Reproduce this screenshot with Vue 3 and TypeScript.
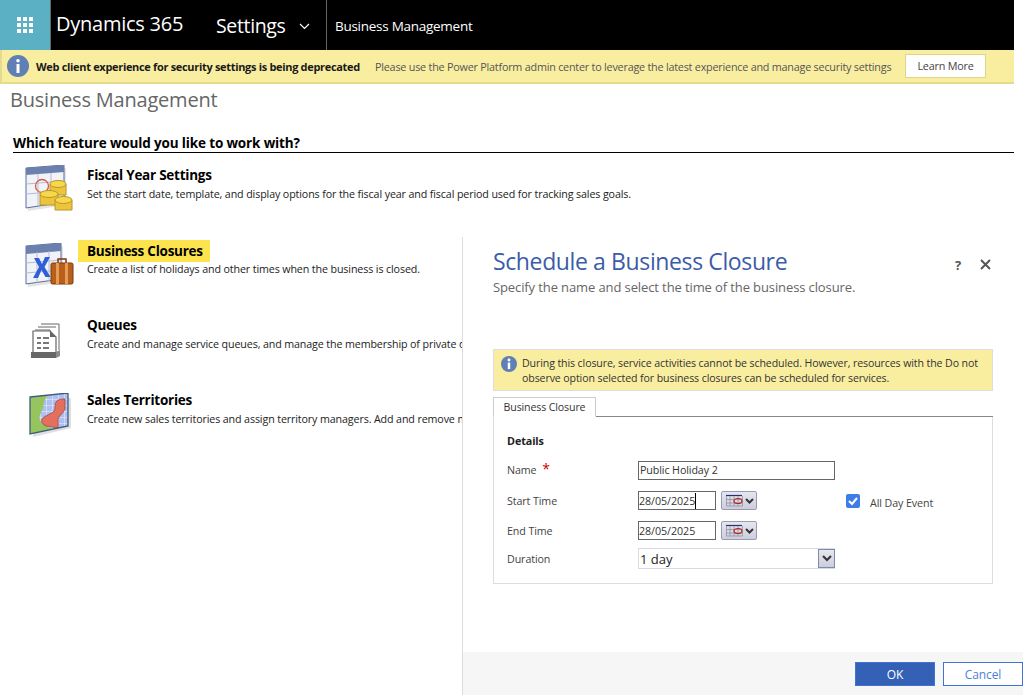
<script setup lang="ts">
const features = [
  { id: 'fy', title: 'Fiscal Year Settings', desc: 'Set the start date, template, and display options for the fiscal year and fiscal period used for tracking sales goals.', hl: false },
  { id: 'bc', title: 'Business Closures', desc: 'Create a list of holidays and other times when the business is closed.', hl: true },
  { id: 'q', title: 'Queues', desc: 'Create and manage service queues, and manage the membership of private queues for your organization and its teams.', hl: false },
  { id: 'st', title: 'Sales Territories', desc: 'Create new sales territories and assign territory managers. Add and remove members from sales territories as needed.', hl: false },
]
</script>

<template>
  <div class="page">
    <header class="nav">
      <div class="waffle">
        <svg width="17" height="17" viewBox="0 0 17 17" fill="#fff">
          <rect x="0" y="0" width="4" height="4" /><rect x="6" y="0" width="4" height="4" /><rect x="12" y="0" width="4" height="4" />
          <rect x="0" y="6" width="4" height="4" /><rect x="6" y="6" width="4" height="4" /><rect x="12" y="6" width="4" height="4" />
          <rect x="0" y="12" width="4" height="4" /><rect x="6" y="12" width="4" height="4" /><rect x="12" y="12" width="4" height="4" />
        </svg>
      </div>
      <div class="brand">Dynamics 365</div>
      <div class="area">Settings</div>
      <svg class="chev" width="11" height="7" viewBox="0 0 11 7" fill="none" stroke="#fff" stroke-width="1.2"><path d="M1 1l4.500 4.500L10 1" /></svg>
      <div class="crumb">Business Management</div>
    </header>

    <div class="banner">
      <svg class="bicon" width="22" height="22" viewBox="0 0 22 22">
        <circle cx="11" cy="11" r="11" fill="#5f7fb5" />
        <rect x="9.500" y="9" width="3" height="9" fill="#fff" />
        <circle cx="11" cy="5.800" r="1.800" fill="#fff" />
      </svg>
      <strong class="btitle">Web client experience for security settings is being deprecated</strong>
      <span class="btext">Please use the Power Platform admin center to leverage the latest experience and manage security settings</span>
      <button class="learn">Learn More</button>
    </div>

    <h1 class="title">Business Management</h1>
    <h2 class="question">Which feature would you like to work with?</h2>

    <ul class="features">
      <li v-for="f in features" :key="f.id" class="feature">
        <div class="ficon">
          <svg v-if="f.id === 'fy'" width="50" height="50" viewBox="0 0 50 50">
            <path d="M3 6l38-3v37L3 46z" fill="#c9c9c9" opacity=".5" />
            <path d="M1 3l38-3v37L1 43z" fill="#f1f3f8" stroke="#5b6f9e" />
            <path d="M1 3l38-3v7L1 10z" fill="#6b80ad" />
            <path d="M13 9v32M26 8v31M1 19l38-3M1 29l38-3" stroke="#b4bdd0" fill="none" />
            <circle cx="17" cy="21" r="6.500" fill="none" stroke="#d8594c" stroke-width="1.300" />
            <path d="M25 19v11h16V19z" fill="#edc53d" stroke="#b8962a" />
            <ellipse cx="33" cy="19" rx="8" ry="3.500" fill="#f7d84b" stroke="#b8962a" />
            <path d="M15 29v11h18V29z" fill="#edc53d" stroke="#b8962a" />
            <ellipse cx="24" cy="29" rx="9" ry="3.500" fill="#f7d84b" stroke="#b8962a" />
            <path d="M30 35v10h17V35z" fill="#edc53d" stroke="#b8962a" />
            <ellipse cx="38.500" cy="35" rx="8.500" ry="3.500" fill="#f7d84b" stroke="#b8962a" />
          </svg>
          <svg v-else-if="f.id === 'bc'" width="50" height="44" viewBox="0 0 50 44">
            <path d="M3 6l35-3v36L3 44z" fill="#c9c9c9" opacity=".5" />
            <path d="M1 3l35-3v36L1 41z" fill="#f1f3f8" stroke="#5b6f9e" />
            <path d="M1 3l35-3v8L1 11z" fill="#6b80ad" />
            <path d="M12 9v31M24 8v30M1 20l35-3M1 30l35-3" stroke="#b4bdd0" fill="none" />
            <path d="M9 15h5l3 6 3-7h5l-5.500 10 6 10h-5l-4-7-3.500 8H8l6-11z" fill="#2f5fd8" />
            <rect x="26" y="20" width="22" height="21" rx="1.500" fill="#b85f1c" stroke="#7a3a0c" />
            <path d="M33 20v-4h8v4" fill="none" stroke="#7a3a0c" stroke-width="1.500" />
            <rect x="31" y="20" width="3" height="21" fill="#e59a55" /><rect x="40" y="20" width="3" height="21" fill="#e59a55" />
          </svg>
          <svg v-else-if="f.id === 'q'" width="50" height="36" viewBox="0 0 50 36">
            <path d="M14 1h18v26M11 4h18" fill="none" stroke="#666" />
            <path d="M8 7h15v24" fill="none" stroke="#666" />
            <path d="M6 8h17l6 6v17H6z" fill="#fff" stroke="#666" stroke-width="1.200" />
            <path d="M23 8l6 6h-6z" fill="#666" />
            <path d="M10 14h4v2h-4zM16 14h6v2h-6zM10 19h4v2h-4zM16 19h6v2h-6zM10 24h4v2h-4zM16 24h6v2h-6z" fill="#777" />
            <path d="M4 29h25v6H4z" fill="#666" /><path d="M29 29l4-2v6l-4 2z" fill="#8a8a8a" />
          </svg>
          <svg v-else width="50" height="46" viewBox="0 0 50 46">
            <defs>
              <pattern id="terr-grid" width="6" height="6" patternUnits="userSpaceOnUse">
                <rect width="6" height="6" fill="#aebff2" />
                <path d="M6 0H0V6" fill="none" stroke="#fff" stroke-width=".8" />
              </pattern>
            </defs>
            <path d="M5 8l38-3v30L5 44z" fill="#c4c4c4" opacity=".55" />
            <path d="M2 4l38-4v33L2 41z" fill="#96c55e" />
            <path d="M21 2.500L40 0v33l-16 3c-3-4-9-3-12-9-2-4 2-8 3-12 1-5 1-10 6-12.500z" fill="url(#terr-grid)" />
            <path d="M37 6c-3 0-7 0-9 3-2 3 0 6-2 9-2 3-9 4-12 8-1 3 1 6 4 7 4 0 9 2 12 2 1-4-1-8 1-11 2-3 5-5 6-8z" fill="#e36f5f" stroke="#96402f" stroke-width=".7" />
            <path d="M2 4l38-4v33L2 41z" fill="none" stroke="#3d5d7a" stroke-width="1.300" />
          </svg>
        </div>
        <div class="ftext">
          <div class="ftitle"><span :class="{ hl: f.hl }">{{ f.title }}</span></div>
          <div class="fdesc">{{ f.desc }}</div>
        </div>
      </li>
    </ul>

    <aside class="dialog">
      <div class="dbody">
        <div class="dhead">
          <div>
            <h2 class="dtitle">Schedule a Business Closure</h2>
            <p class="dsub">Specify the name and select the time of the business closure.</p>
          </div>
          <div class="dtools">
            <span class="help">?</span>
            <svg width="11" height="11" viewBox="0 0 11 11" stroke="#555" stroke-width="2"><path d="M1 1l9 9M10 1l-9 9" /></svg>
          </div>
        </div>

        <div class="notice">
          <svg class="nicon" width="16" height="16" viewBox="0 0 22 22">
            <circle cx="11" cy="11" r="11" fill="#5f7fb5" />
            <rect x="9.300" y="9" width="3.400" height="9" fill="#fff" />
            <circle cx="11" cy="5.600" r="2" fill="#fff" />
          </svg>
          <p>During this closure, service activities cannot be scheduled. However, resources with the Do not observe option selected for business closures can be scheduled for services.</p>
        </div>

        <div class="tabs"><div class="tab">Business Closure</div></div>
        <section class="panel">
          <div class="details">Details</div>
          <div class="row r-name">
            <label class="lab">Name <span class="req">*</span></label>
            <div class="input name">Public Holiday 2</div>
          </div>
          <div class="row r-start">
            <label class="lab">Start Time</label>
            <div class="input date">28/05/2025<i class="caret"></i></div>
            <div class="picker">
              <svg width="32" height="18" viewBox="0 0 32 18">
                <path d="M3 3.500h16" stroke="#22337a" stroke-width="1.200" />
                <path d="M3.500 4v10h16V4M3 7.500h16M3 11h16M7 4v10M11 4v10M15 4v10" stroke="#8a8aa0" stroke-width=".7" fill="none" />
                <ellipse cx="15" cy="9" rx="4" ry="2.500" fill="none" stroke="#b5271a" stroke-width="1.200" />
                <path d="M23 7l3.500 3.500L30 7" stroke="#333" stroke-width="2" fill="none" />
              </svg>
            </div>
            <label class="allday">
              <span class="check">
                <svg width="14" height="14" viewBox="0 0 14 14" fill="none" stroke="#fff" stroke-width="2"><path d="M3 7l3 3 5-6" /></svg>
              </span>
              All Day Event
            </label>
          </div>
          <div class="row r-end">
            <label class="lab">End Time</label>
            <div class="input date">28/05/2025</div>
            <div class="picker">
              <svg width="32" height="18" viewBox="0 0 32 18">
                <path d="M3 3.500h16" stroke="#22337a" stroke-width="1.200" />
                <path d="M3.500 4v10h16V4M3 7.500h16M3 11h16M7 4v10M11 4v10M15 4v10" stroke="#8a8aa0" stroke-width=".7" fill="none" />
                <ellipse cx="15" cy="9" rx="4" ry="2.500" fill="none" stroke="#b5271a" stroke-width="1.200" />
                <path d="M23 7l3.500 3.500L30 7" stroke="#333" stroke-width="2" fill="none" />
              </svg>
            </div>
          </div>
          <div class="row r-dur">
            <label class="lab">Duration</label>
            <div class="select">
              <span class="sval">1 day</span>
              <span class="sbtn">
                <svg width="10" height="7" viewBox="0 0 10 7" fill="none" stroke="#333" stroke-width="2"><path d="M1 1l4 4 4-4" /></svg>
              </span>
            </div>
          </div>
        </section>
      </div>
      <footer class="dfoot">
        <button class="ok">OK</button>
        <button class="cancel">Cancel</button>
      </footer>
    </aside>
  </div>
</template>

<style>
html, body { margin: 0; background: #fff; overflow: hidden; }
</style>

<style scoped>
.page { position: relative; width: 1014px; height: 695px; font-family: "Open Sans", "Noto Sans", sans-serif; color: #000; }
.nav { height: 50px; background: #000; color: #fff; display: flex; align-items: center; }
.waffle { width: 50px; height: 50px; background: #5bb0c3; border-right: 1px solid #666; box-sizing: content-box; display: flex; align-items: center; justify-content: center; }
.brand { margin-left: 5px; width: 160px; font-size: 20px; letter-spacing: -.25px; white-space: nowrap; padding-bottom: 3px; }
.area { font-size: 19.500px; letter-spacing: -.35px; width: 83px; padding-top: 1px; }
.chev { margin-top: 3px; }
.crumb { margin-left: 16px; height: 50px; line-height: 52px; padding-left: 8px; border-left: 1px solid #666; font-size: 13.500px; letter-spacing: -.27px; white-space: nowrap; }
.banner { height: 34px; box-sizing: border-box; background: #f9eea0; border-left: 2px solid #e3dc8e; border-bottom: 2px solid #e3dc8e; display: flex; align-items: center; position: relative; font-size: 11.500px; }
.bicon { margin-left: 5px; flex: none; }
.btitle { margin-left: 7px; width: 339px; font-size: 11px; white-space: nowrap; letter-spacing: -.32px; color: #1a1a1a; }
.btext { white-space: nowrap; color: #555; font-size: 10.800px; width: 530px; letter-spacing: -.22px; }
.learn { width: 81px; height: 24px; margin-top: -1px; background: #fff; border: 1px solid #ddd68a; font: inherit; font-size: 10.800px; color: #444; padding: 0; letter-spacing: -.2px; }
.title { margin: 3px 0 0 10px; font-size: 20px; line-height: 26px; font-weight: 400; color: #666; letter-spacing: -.2px; }
.question { margin: 21px 0 0 13px; font-size: 13.500px; line-height: 19px; height: 19px; box-sizing: border-box; font-weight: 700; border-bottom: 1px solid #000; letter-spacing: -.15px; }
.features { list-style: none; margin: 0; padding: 12px 0 0 25px; }
.feature { display: flex; height: 75px; overflow: hidden; }
.ficon { width: 62px; flex: none; }
.feature:nth-child(2) .ficon { padding-top: 3px; box-sizing: border-box; }
.feature:nth-child(3) .ficon { padding: 8px 0 0 2px; box-sizing: border-box; }
.feature:nth-child(4) .ficon { padding: 3px 0 0 3px; box-sizing: border-box; }
.ftext { white-space: nowrap; }
.ftitle { font-size: 13.500px; font-weight: 700; line-height: 20px; letter-spacing: -.25px; }
.hl { background: #fde44f; display: inline-block; margin-left: -9px; padding: 0 7px 0 9px; height: 22px; line-height: 22px; }
.fdesc { font-size: 10.700px; line-height: 18px; color: #222; letter-spacing: -.12px; }
.feature:nth-child(2) .ftitle { height: 20px; }
.dialog { position: absolute; left: 462px; top: 237px; width: 561px; height: 458px; box-sizing: border-box; background: #fff; border-left: 1px solid #ddd; display: flex; flex-direction: column; z-index: 2; }
.dbody { flex: 1; padding: 0 30px 0 30px; }
.dhead { display: flex; justify-content: space-between; height: 112px; }
.dtitle { margin: 8px 0 0; font-size: 23px; line-height: 32px; font-weight: 400; color: #3b5ca8; letter-spacing: -.38px; white-space: nowrap; }
.dsub { margin: 0; font-size: 13px; line-height: 20px; color: #666; letter-spacing: -.11px; white-space: nowrap; }
.dtools { display: flex; align-items: flex-start; gap: 17px; padding-top: 22px; padding-right: 2px; }
.help { font-size: 13px; font-weight: 700; color: #555; line-height: 11px; width: 8px; margin-top: 1px; }
.notice { height: 42px; box-sizing: border-box; background: #f9eea0; border: 1px solid #ddd; display: flex; padding: 6px 4px 0 7px; }
.nicon { flex: none; margin-right: 5px; }
.notice p { margin: 0; font-size: 10.600px; line-height: 15px; color: #333; letter-spacing: -.11px; }
.tabs { margin-top: 6px; height: 20px; box-sizing: border-box; border-bottom: 1px solid #888; display: flex; }
.tab { width: 103px; height: 20px; box-sizing: border-box; background: #fff; border: 1px solid #ccc; border-bottom: 1px solid #fff; font-size: 10.600px; line-height: 18px; text-align: center; color: #333; letter-spacing: -.13px; }
.panel { height: 167px; box-sizing: border-box; border: 1px solid #ddd; border-top: 0; padding: 16px 0 0 13px; }
.details { font-size: 10.800px; font-weight: 700; line-height: 15px; letter-spacing: -.1px; color: #222; }
.row { display: flex; align-items: center; }
.lab { width: 131px; font-size: 10.700px; color: #444; letter-spacing: -.1px; flex: none; }
.req { color: #c00; font-size: 14px; line-height: 10px; margin-left: 3px; }
.r-name { margin-top: 13px; height: 18px; }
.r-start { margin-top: 12px; height: 19px; position: relative; }
.r-end { margin-top: 11px; height: 19px; }
.r-dur { margin-top: 8px; height: 21px; }
.input { border: 1px solid #666; box-sizing: border-box; font-size: 10.700px; color: #333; display: flex; align-items: center; white-space: nowrap; }
.name { width: 197px; height: 19px; padding-left: 1px; letter-spacing: -.1px; }
.date { width: 78px; height: 19px; letter-spacing: -.05px; }
.caret { display: inline-block; width: 1px; height: 16px; background: #000; }
.picker { margin-left: 5px; width: 36px; height: 19px; box-sizing: border-box; border: 1px solid #9b9bb0; border-radius: 2px; background: linear-gradient(#e6e6ee, #cdcedc); display: flex; align-items: center; justify-content: center; }
.allday { position: absolute; left: 339px; top: 5px; display: flex; align-items: center; font-size: 10.700px; color: #444; gap: 10px; letter-spacing: -.1px; white-space: nowrap; }
.check { width: 14px; height: 14px; border-radius: 2px; background: #3f7ce6; display: inline-flex; margin-top: -5px; }
.select { width: 197px; height: 21px; box-sizing: border-box; border: 1px solid #dadae6; border-right: 0; display: flex; justify-content: space-between; align-items: center; }
.sval { font-size: 13px; color: #222; padding-left: 1px; }
.sbtn { width: 17px; height: 19px; box-sizing: border-box; border: 1px solid #7d8aa8; background: linear-gradient(#e6e6ee, #cdcedc); display: flex; align-items: center; justify-content: center; }
.dfoot { height: 43px; background: #f6f6f6; display: flex; justify-content: flex-end; gap: 8px; padding-top: 10px; box-sizing: border-box; }
.dfoot button { width: 80px; height: 24px; font-family: inherit; font-size: 12px; padding: 0; letter-spacing: -.1px; }
.ok { background: #3460b5; border: 1px solid #3f74d6; color: #fff; }
.cancel { background: #fff; border: 1px solid #3f74d6; color: #4f7fd6; }
</style>
